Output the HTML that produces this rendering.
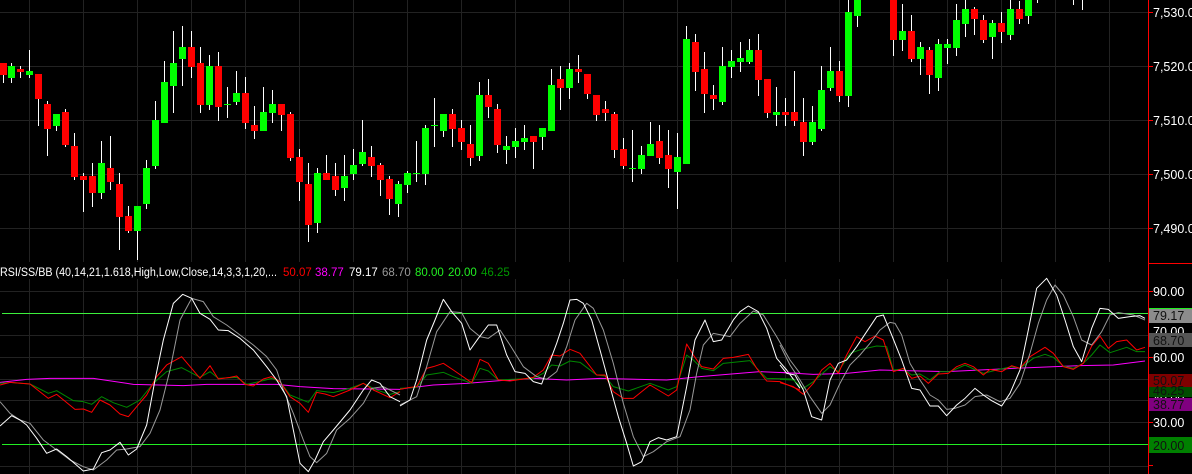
<!DOCTYPE html>
<html><head><meta charset="utf-8"><style>
html,body{margin:0;padding:0;background:#000;overflow:hidden}
svg{display:block;font-family:"Liberation Sans",Arial,sans-serif}
</style></head><body>
<svg width="1192" height="474" viewBox="0 0 1192 474" xmlns="http://www.w3.org/2000/svg">
<rect width="1192" height="474" fill="#000"/>
<g stroke="#222" stroke-width="1">
<line x1="0" y1="12.5" x2="1148" y2="12.5"/><line x1="0" y1="66.5" x2="1148" y2="66.5"/><line x1="0" y1="120.5" x2="1148" y2="120.5"/><line x1="0" y1="174.5" x2="1148" y2="174.5"/><line x1="0" y1="228.5" x2="1148" y2="228.5"/>
<line x1="0" y1="291.5" x2="1148" y2="291.5"/><line x1="0" y1="335.5" x2="1148" y2="335.5"/><line x1="0" y1="357.5" x2="1148" y2="357.5"/><line x1="0" y1="379.5" x2="1148" y2="379.5"/><line x1="0" y1="400.5" x2="1148" y2="400.5"/><line x1="0" y1="422.5" x2="1148" y2="422.5"/><line x1="0" y1="466.5" x2="1148" y2="466.5"/>
</g>
<g stroke="#222" stroke-width="1">
<path d="M29.5 0V262M83.5 0V262M137.5 0V262M191.5 0V262M245.5 0V262M299.5 0V262M353.5 0V262M407.5 0V262M461.5 0V262M515.5 0V262M569.5 0V262M623.5 0V262M677.5 0V262M731.5 0V262M785.5 0V262M839.5 0V262M893.5 0V262M947.5 0V262M1001.5 0V262M1055.5 0V262M1109.5 0V262"/>
<path d="M29.5 279V474M83.5 279V474M137.5 279V474M191.5 279V474M245.5 279V474M299.5 279V474M353.5 279V474M407.5 279V474M461.5 279V474M515.5 279V474M569.5 279V474M623.5 279V474M677.5 279V474M731.5 279V474M785.5 279V474M839.5 279V474M893.5 279V474M947.5 279V474M1001.5 279V474M1055.5 279V474M1109.5 279V474"/>
</g>
<g fill="#fff">
<rect x="3" y="63" width="1" height="20"/><rect x="11" y="63" width="1" height="20"/><rect x="20" y="66" width="1" height="12"/><rect x="29" y="50" width="1" height="28"/><rect x="38" y="74" width="1" height="52"/><rect x="47" y="101" width="1" height="55"/><rect x="56" y="114" width="1" height="17"/><rect x="65" y="109" width="1" height="38"/><rect x="74" y="133" width="1" height="47"/><rect x="83" y="173" width="1" height="39"/><rect x="92" y="163" width="1" height="44"/><rect x="101" y="141" width="1" height="58"/><rect x="110" y="136" width="1" height="54"/><rect x="119" y="173" width="1" height="77"/><rect x="128" y="206" width="1" height="27"/><rect x="137" y="206" width="1" height="54"/><rect x="146" y="160" width="1" height="49"/><rect x="155" y="101" width="1" height="68"/><rect x="164" y="61" width="1" height="62"/><rect x="173" y="31" width="1" height="82"/><rect x="182" y="26" width="1" height="60"/><rect x="191" y="31" width="1" height="47"/><rect x="200" y="47" width="1" height="66"/><rect x="209" y="55" width="1" height="55"/><rect x="218" y="52" width="1" height="69"/><rect x="227" y="87" width="1" height="31"/><rect x="236" y="71" width="1" height="34"/><rect x="245" y="77" width="1" height="52"/><rect x="254" y="106" width="1" height="33"/><rect x="263" y="87" width="1" height="44"/><rect x="272" y="90" width="1" height="33"/><rect x="281" y="104" width="1" height="27"/><rect x="290" y="112" width="1" height="49"/><rect x="299" y="149" width="1" height="52"/><rect x="308" y="163" width="1" height="79"/><rect x="317" y="168" width="1" height="65"/><rect x="326" y="155" width="1" height="25"/><rect x="335" y="163" width="1" height="33"/><rect x="344" y="155" width="1" height="46"/><rect x="353" y="149" width="1" height="31"/><rect x="362" y="120" width="1" height="46"/><rect x="371" y="146" width="1" height="31"/><rect x="380" y="163" width="1" height="33"/><rect x="389" y="176" width="1" height="39"/><rect x="398" y="181" width="1" height="36"/><rect x="407" y="171" width="1" height="22"/><rect x="416" y="141" width="1" height="41"/><rect x="425" y="125" width="1" height="60"/><rect x="434" y="98" width="1" height="49"/><rect x="443" y="114" width="1" height="23"/><rect x="452" y="109" width="1" height="38"/><rect x="461" y="120" width="1" height="30"/><rect x="470" y="125" width="1" height="41"/><rect x="479" y="82" width="1" height="79"/><rect x="488" y="79" width="1" height="39"/><rect x="497" y="104" width="1" height="49"/><rect x="506" y="136" width="1" height="28"/><rect x="515" y="128" width="1" height="30"/><rect x="524" y="125" width="1" height="25"/><rect x="533" y="136" width="1" height="33"/><rect x="542" y="128" width="1" height="22"/><rect x="551" y="69" width="1" height="62"/><rect x="560" y="66" width="1" height="44"/><rect x="569" y="63" width="1" height="36"/><rect x="578" y="55" width="1" height="28"/><rect x="587" y="74" width="1" height="25"/><rect x="596" y="95" width="1" height="26"/><rect x="605" y="101" width="1" height="20"/><rect x="614" y="112" width="1" height="46"/><rect x="623" y="138" width="1" height="31"/><rect x="632" y="130" width="1" height="52"/><rect x="641" y="146" width="1" height="28"/><rect x="650" y="122" width="1" height="34"/><rect x="659" y="125" width="1" height="39"/><rect x="668" y="130" width="1" height="58"/><rect x="677" y="133" width="1" height="76"/><rect x="686" y="26" width="1" height="138"/><rect x="695" y="34" width="1" height="57"/><rect x="704" y="52" width="1" height="61"/><rect x="713" y="85" width="1" height="25"/><rect x="722" y="47" width="1" height="58"/><rect x="731" y="50" width="1" height="28"/><rect x="740" y="42" width="1" height="30"/><rect x="749" y="39" width="1" height="25"/><rect x="758" y="34" width="1" height="62"/><rect x="767" y="79" width="1" height="39"/><rect x="776" y="87" width="1" height="39"/><rect x="785" y="98" width="1" height="28"/><rect x="794" y="71" width="1" height="55"/><rect x="803" y="98" width="1" height="58"/><rect x="812" y="106" width="1" height="39"/><rect x="821" y="66" width="1" height="65"/><rect x="830" y="47" width="1" height="44"/><rect x="839" y="61" width="1" height="41"/><rect x="848" y="0" width="1" height="107"/><rect x="857" y="0" width="1" height="27"/><rect x="893" y="0" width="1" height="56"/><rect x="902" y="4" width="1" height="47"/><rect x="911" y="15" width="1" height="47"/><rect x="920" y="42" width="1" height="33"/><rect x="929" y="47" width="1" height="47"/><rect x="938" y="39" width="1" height="52"/><rect x="947" y="39" width="1" height="25"/><rect x="956" y="4" width="1" height="52"/><rect x="965" y="0" width="1" height="37"/><rect x="974" y="7" width="1" height="28"/><rect x="983" y="15" width="1" height="28"/><rect x="992" y="20" width="1" height="39"/><rect x="1001" y="12" width="1" height="31"/><rect x="1010" y="0" width="1" height="40"/><rect x="1019" y="1" width="1" height="23"/><rect x="1028" y="0" width="1" height="24"/><rect x="1037" y="0" width="1" height="3"/><rect x="1073" y="0" width="1" height="5"/><rect x="1082" y="0" width="1" height="10"/>
</g>
<g fill="#ff0000">
<rect x="0" y="63" width="7" height="12"/><rect x="17" y="69" width="7" height="3"/><rect x="35" y="74" width="7" height="25"/><rect x="44" y="104" width="7" height="25"/><rect x="62" y="112" width="7" height="33"/><rect x="71" y="146" width="7" height="31"/><rect x="80" y="176" width="7" height="4"/><rect x="89" y="176" width="7" height="17"/><rect x="107" y="168" width="7" height="14"/><rect x="116" y="184" width="7" height="33"/><rect x="125" y="216" width="7" height="15"/><rect x="188" y="47" width="7" height="20"/><rect x="197" y="63" width="7" height="42"/><rect x="215" y="66" width="7" height="41"/><rect x="242" y="93" width="7" height="30"/><rect x="251" y="125" width="7" height="6"/><rect x="278" y="104" width="7" height="11"/><rect x="287" y="114" width="7" height="44"/><rect x="296" y="157" width="7" height="25"/><rect x="305" y="184" width="7" height="41"/><rect x="323" y="173" width="7" height="7"/><rect x="332" y="176" width="7" height="14"/><rect x="368" y="157" width="7" height="9"/><rect x="377" y="165" width="7" height="15"/><rect x="386" y="179" width="7" height="20"/><rect x="449" y="114" width="7" height="15"/><rect x="458" y="128" width="7" height="14"/><rect x="467" y="144" width="7" height="14"/><rect x="485" y="95" width="7" height="12"/><rect x="494" y="109" width="7" height="36"/><rect x="530" y="136" width="7" height="6"/><rect x="557" y="79" width="7" height="9"/><rect x="575" y="69" width="7" height="3"/><rect x="584" y="74" width="7" height="20"/><rect x="593" y="95" width="7" height="20"/><rect x="602" y="109" width="7" height="4"/><rect x="611" y="114" width="7" height="36"/><rect x="620" y="149" width="7" height="17"/><rect x="656" y="141" width="7" height="17"/><rect x="665" y="155" width="7" height="14"/><rect x="692" y="42" width="7" height="30"/><rect x="701" y="69" width="7" height="25"/><rect x="710" y="95" width="7" height="4"/><rect x="755" y="50" width="7" height="30"/><rect x="764" y="79" width="7" height="34"/><rect x="782" y="112" width="7" height="3"/><rect x="791" y="112" width="7" height="9"/><rect x="800" y="122" width="7" height="20"/><rect x="836" y="71" width="7" height="25"/><rect x="890" y="0" width="7" height="40"/><rect x="908" y="31" width="7" height="28"/><rect x="926" y="50" width="7" height="25"/><rect x="971" y="9" width="7" height="10"/><rect x="980" y="20" width="7" height="20"/><rect x="998" y="23" width="7" height="9"/><rect x="1016" y="9" width="7" height="10"/>
</g>
<g fill="#00ff00">
<rect x="8" y="66" width="7" height="12"/><rect x="26" y="71" width="7" height="4"/><rect x="53" y="114" width="7" height="12"/><rect x="98" y="163" width="7" height="30"/><rect x="134" y="206" width="7" height="25"/><rect x="143" y="168" width="7" height="36"/><rect x="152" y="120" width="7" height="46"/><rect x="161" y="82" width="7" height="41"/><rect x="170" y="63" width="7" height="23"/><rect x="179" y="47" width="7" height="12"/><rect x="206" y="66" width="7" height="39"/><rect x="224" y="104" width="7" height="1"/><rect x="233" y="93" width="7" height="9"/><rect x="260" y="112" width="7" height="19"/><rect x="269" y="104" width="7" height="9"/><rect x="314" y="173" width="7" height="50"/><rect x="341" y="176" width="7" height="12"/><rect x="350" y="165" width="7" height="9"/><rect x="359" y="152" width="7" height="12"/><rect x="395" y="184" width="7" height="20"/><rect x="404" y="173" width="7" height="12"/><rect x="413" y="173" width="7" height="1"/><rect x="422" y="128" width="7" height="46"/><rect x="431" y="125" width="7" height="1"/><rect x="440" y="114" width="7" height="17"/><rect x="476" y="95" width="7" height="61"/><rect x="503" y="146" width="7" height="4"/><rect x="512" y="141" width="7" height="6"/><rect x="521" y="138" width="7" height="4"/><rect x="539" y="128" width="7" height="9"/><rect x="548" y="85" width="7" height="46"/><rect x="566" y="69" width="7" height="19"/><rect x="629" y="168" width="7" height="1"/><rect x="638" y="155" width="7" height="14"/><rect x="647" y="144" width="7" height="12"/><rect x="674" y="157" width="7" height="15"/><rect x="683" y="39" width="7" height="125"/><rect x="719" y="66" width="7" height="36"/><rect x="728" y="61" width="7" height="6"/><rect x="737" y="58" width="7" height="4"/><rect x="746" y="50" width="7" height="12"/><rect x="773" y="112" width="7" height="3"/><rect x="809" y="122" width="7" height="20"/><rect x="818" y="90" width="7" height="39"/><rect x="827" y="71" width="7" height="17"/><rect x="845" y="12" width="7" height="84"/><rect x="854" y="0" width="7" height="16"/><rect x="899" y="31" width="7" height="9"/><rect x="917" y="47" width="7" height="12"/><rect x="935" y="44" width="7" height="34"/><rect x="944" y="44" width="7" height="4"/><rect x="953" y="20" width="7" height="28"/><rect x="962" y="9" width="7" height="15"/><rect x="989" y="23" width="7" height="14"/><rect x="1007" y="9" width="7" height="26"/><rect x="1025" y="0" width="7" height="16"/>
</g>
<line x1="2" y1="313.5" x2="1148" y2="313.5" stroke="#3cf03c" stroke-width="1"/>
<line x1="2" y1="444.5" x2="1148" y2="444.5" stroke="#22ee22" stroke-width="1"/>
<g fill="none" stroke-width="1" stroke-linejoin="round">
<g transform="translate(0,270) scale(0.33333)">
<polyline vector-effect="non-scaling-stroke" stroke="#ff00ff" points="0,337 80,328 150,325 280,325 400,343 550,347 620,343 830,343 900,350 1000,356 1200,358"/>
<polyline vector-effect="non-scaling-stroke" stroke="#008800" points="0,340 30,337 90,342 145,370 170,362 220,392 250,395 275,403 305,380 340,398 380,412 420,390 460,340 500,305 545,293 600,322 630,305 655,325 710,322 740,343 790,332 815,325 840,335 870,375 925,397 950,362 1000,368 1050,355 1090,340 1130,360 1170,373 1200,365"/>
<polyline vector-effect="non-scaling-stroke" stroke="#ff0000" points="0,345 30,337 90,342 145,385 170,373 225,418 250,417 275,427 300,390 330,405 360,432 385,440 410,410 440,375 470,320 500,285 545,260 600,325 630,287 655,327 690,322 710,318 735,343 760,348 790,327 815,320 840,335 870,380 900,400 925,427 950,367 975,372 1000,380 1050,360 1090,340 1120,360 1170,383 1200,365"/>
<polyline vector-effect="non-scaling-stroke" stroke="#999" points="0,395 30,430 60,450 90,460 130,510 170,540 210,570 250,590 280,600 320,570 350,540 380,537 420,530 450,490 480,420 510,300 540,150 575,85 610,95 640,140 680,165 720,195 760,225 800,260 830,300 850,360 880,430 910,510 930,560 950,578 980,550 1010,480 1050,445 1090,400 1115,355 1150,350 1200,375"/>
<polyline vector-effect="non-scaling-stroke" stroke="#fff" points="0,468 35,437 60,450 80,465 110,505 140,550 170,537 200,560 250,603 280,597 305,548 330,540 360,517 385,555 410,537 440,465 465,330 490,210 520,100 548,73 575,85 600,130 630,148 655,180 685,182 720,205 760,240 800,290 830,330 860,380 880,480 900,580 925,605 945,570 970,515 1000,480 1050,420 1090,360 1115,330 1140,340 1170,380 1200,395"/>
</g>
<g transform="translate(400,270) scale(0.33333)">
<polyline vector-effect="non-scaling-stroke" stroke="#ff00ff" points="0,357 100,345 200,340 300,332 400,325 500,330 600,325 800,330 900,320 1080,305 1200,310"/>
<polyline vector-effect="non-scaling-stroke" stroke="#008800" points="0,355 50,352 80,315 130,307 160,320 215,340 240,295 265,303 295,330 400,325 430,310 455,285 480,288 510,273 540,277 590,315 615,318 640,350 685,363 750,340 805,360 830,350 860,255 880,270 905,295 940,302 970,280 1050,272 1080,305 1100,325 1180,327 1200,350"/>
<polyline vector-effect="non-scaling-stroke" stroke="#ff0000" points="0,358 25,353 50,350 80,295 100,290 130,280 160,300 215,338 240,268 265,280 295,330 330,333 400,322 430,300 455,255 480,258 510,238 540,250 590,315 615,315 640,365 670,385 700,385 750,345 805,378 830,360 860,222 880,255 905,290 940,297 970,265 1000,262 1045,253 1070,295 1100,333 1140,335 1200,360"/>
<polyline vector-effect="non-scaling-stroke" stroke="#999" points="0,405 50,380 80,290 110,185 150,125 185,128 210,175 240,200 265,205 300,180 330,225 370,290 410,320 440,328 470,305 500,230 525,150 560,100 580,115 610,180 640,280 670,400 700,500 730,560 760,545 800,515 840,500 870,420 890,310 910,225 940,190 990,200 1020,160 1060,123 1090,135 1130,200 1170,270 1200,310"/>
<polyline vector-effect="non-scaling-stroke" stroke="#fff" points="0,408 30,390 50,330 80,210 105,150 130,88 155,125 185,160 210,240 235,205 265,165 290,165 320,255 345,305 375,310 400,335 425,342 440,300 470,220 490,160 510,90 530,88 550,100 575,150 600,240 630,350 655,440 680,520 700,588 725,575 750,515 775,503 800,510 830,500 860,350 885,210 915,150 940,215 965,210 1000,150 1020,125 1045,108 1075,125 1100,175 1130,265 1160,300 1200,355"/>
</g>
<g transform="translate(780,270) scale(0.33333)">
<polyline vector-effect="non-scaling-stroke" stroke="#ff00ff" points="0,307 100,313 200,310 300,300 500,305 700,295 900,287 1000,285 1095,273"/>
<polyline vector-effect="non-scaling-stroke" stroke="#008800" points="0,328 40,330 70,355 100,335 150,290 175,305 210,250 245,238 290,228 320,230 340,300 370,297 395,315 420,312 450,330 480,305 510,305 555,285 610,310 650,300 695,290 720,295 760,265 795,253 820,262 850,288 880,295 910,280 935,255 960,225 990,248 1040,232 1070,245 1095,245"/>
<polyline vector-effect="non-scaling-stroke" stroke="#ff0000" points="0,338 40,350 70,373 100,340 125,300 150,280 175,310 200,255 230,200 255,215 285,198 310,210 340,305 370,295 395,325 420,318 445,340 475,312 505,310 530,290 555,280 580,290 610,315 630,298 665,305 695,287 720,295 750,260 795,232 820,250 850,290 880,298 910,280 935,228 960,198 985,235 1010,215 1040,210 1070,240 1095,232"/>
<polyline vector-effect="non-scaling-stroke" stroke="#999" points="0,225 30,285 60,330 90,380 125,430 150,405 180,340 210,285 240,255 270,220 300,180 330,157 345,160 365,195 390,280 420,330 450,375 475,390 500,418 525,415 555,405 585,380 620,375 660,395 690,385 720,340 750,250 775,160 800,90 825,45 850,75 880,140 905,210 935,225 965,185 990,135 1015,128 1060,135 1095,150"/>
<polyline vector-effect="non-scaling-stroke" stroke="#fff" points="0,285 20,310 45,315 70,360 95,440 125,450 150,330 175,280 200,270 230,230 260,185 290,140 310,135 335,195 365,270 395,355 420,360 450,408 475,408 500,437 530,405 555,385 585,355 610,375 635,392 665,408 690,370 720,300 745,180 770,55 800,25 830,75 855,150 880,230 905,275 935,175 960,115 985,118 1015,145 1050,140 1080,137 1095,145"/>
</g>
</g>
<g font-size="11.5">
<text x="0" y="276" fill="#fff" textLength="277" lengthAdjust="spacingAndGlyphs">RSI/SS/BB (40,14,21,1.618,High,Low,Close,14,3,3,1,20,...</text>
<text x="283" y="276" fill="#ff0000">50.07</text>
<text x="315" y="276" fill="#ff00ff">38.77</text>
<text x="349" y="276" fill="#fff">79.17</text>
<text x="382" y="276" fill="#999">68.70</text>
<text x="415" y="276" fill="#22ee22">80.00</text>
<text x="448" y="276" fill="#22ee22">20.00</text>
<text x="481" y="276" fill="#009900">46.25</text>
</g>
<rect x="1148" y="0" width="1" height="474" fill="#ff0000"/>
<rect x="1148" y="263" width="44" height="1" fill="#ff0000"/>
<g fill="#ff0000">
<rect x="1149" y="12" width="4" height="1"/><rect x="1149" y="66" width="4" height="1"/><rect x="1149" y="120" width="4" height="1"/><rect x="1149" y="174" width="4" height="1"/><rect x="1149" y="228" width="4" height="1"/>
<rect x="1149" y="291" width="4" height="1"/><rect x="1149" y="357" width="4" height="1"/><rect x="1149" y="422" width="4" height="1"/><rect x="1149" y="465" width="4" height="1"/>
</g>
<g font-size="12.5" fill="#fff">
<text x="1153" y="17">7,530.0</text><text x="1153" y="71">7,520.0</text><text x="1153" y="125">7,510.0</text><text x="1153" y="179">7,500.0</text><text x="1153" y="233">7,490.0</text>
<text x="1153" y="296">90.00</text><text x="1153" y="336">70.00</text><text x="1153" y="362">60.00</text><text x="1153" y="403">40.00</text><text x="1153" y="427">30.00</text>
</g>
<rect x="1149" y="308" width="43" height="1" fill="#22ee22"/>
<rect x="1149" y="309" width="43" height="14" fill="#8c8c8c"/>
<rect x="1149" y="333" width="43" height="14" fill="#555"/>
<rect x="1149" y="386" width="43" height="11" fill="#004d00"/>
<rect x="1149" y="374" width="43" height="13" fill="#800000"/>
<rect x="1149" y="398" width="43" height="13" fill="#800080"/>
<rect x="1149" y="437" width="43" height="16" fill="#008000"/>
<g font-size="12.5" fill="#111">
<text x="1153" y="320">79.17</text><text x="1153" y="345">68.70</text><text x="1153" y="395">46.25</text><text x="1153" y="385">50.07</text><text x="1153" y="409">38.77</text><text x="1153" y="450">20.00</text>
</g>
</svg>
</body></html>
